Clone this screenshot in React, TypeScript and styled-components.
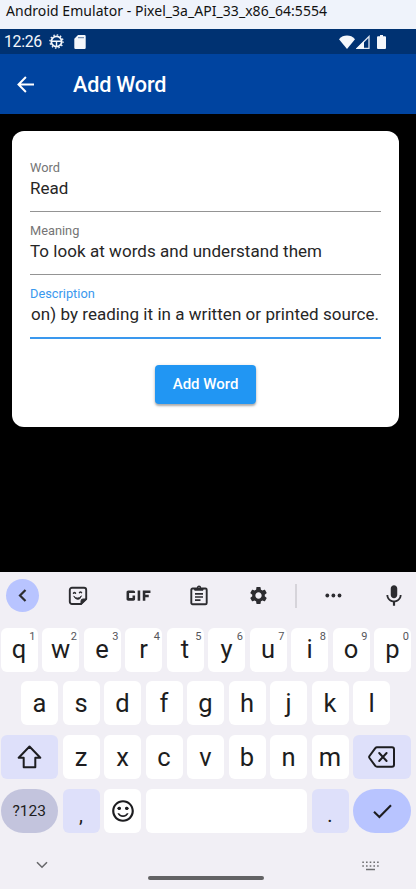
import React from "react";
import styled, { createGlobalStyle, css } from "styled-components";
import { MdOutlineGif, MdSettings, MdMic, MdSentimentSatisfiedAlt } from "react-icons/md";

const GlobalStyle = createGlobalStyle`
  * { box-sizing: border-box; }
  html, body { margin: 0; padding: 0; background: #000; overflow: hidden; }
  svg { display: block; flex: none; }
`;

const Screen = styled.div`
  width: 416px;
  height: 889px;
  display: flex;
  flex-direction: column;
  background: #000;
  font-family: Roboto, sans-serif;
  overflow: hidden;
`;

const WindowTitle = styled.div`
  height: 29px;
  flex: none;
  padding-left: 6px;
  background: #eff3fb;
  color: #111;
  font: 14px/22px "Noto Sans", sans-serif;
  letter-spacing: 0.04px;
  white-space: pre;
`;

const StatusBar = styled.div`
  height: 25px;
  flex: none;
  display: flex;
  align-items: center;
  padding: 0 30px 0 4px;
  background: #003272;
  color: #f4f7fb;
`;

const Clock = styled.span`
  width: 45px;
  font-size: 15.8px;
  line-height: 25px;
  letter-spacing: -0.3px;
`;

const StatusIcons = styled.div<{ $gap: number }>`
  display: flex;
  align-items: center;
  gap: ${(p) => p.$gap}px;
`;

const BatterySlot = styled.div`
  margin-left: 7px;
`;

const Spacer = styled.div`
  flex: 1;
`;

const AppBar = styled.header`
  height: 60px;
  flex: none;
  display: flex;
  align-items: center;
  gap: 38px;
  padding-left: 17px;
  background: #0044a0;
  color: #fff;
`;

const Heading = styled.h1`
  margin: 0;
  padding-top: 2px;
  font-size: 21.6px;
  line-height: 28px;
  font-weight: 500;
  letter-spacing: -0.18px;
`;

const Body = styled.main`
  flex: 1;
  padding: 17px 17.2px 0 12.3px;
`;

const Card = styled.div`
  height: 296.4px;
  display: flex;
  flex-direction: column;
  padding: 27px 17.7px 0;
  border-radius: 12px;
  background: #fff;
`;

const Field = styled.div<{ $active?: boolean }>`
  height: ${(p) => (p.$active ? 55 : 54)}px;
  margin-bottom: ${(p) => (p.$active ? 0 : 9)}px;
  flex: none;
  display: flex;
  flex-direction: column;
  white-space: nowrap;
  border-bottom: ${(p) => (p.$active ? "2px solid #3a98ee" : "1px solid #949494")};
`;

const Label = styled.label<{ $active?: boolean }>`
  font-size: 12.8px;
  line-height: 19px;
  color: ${(p) => (p.$active ? "#3a98ee" : "#757575")};
`;

const Value = styled.span<{ $shift?: number }>`
  padding-left: ${(p) => p.$shift ?? 0}px;
  font-size: 17px;
  line-height: 23px;
  letter-spacing: 0.045px;
  color: #262626;
`;

const Submit = styled.button`
  width: 101px;
  height: 39px;
  margin: 26px 0 0;
  align-self: center;
  border: 0;
  padding: 0;
  border-radius: 4px;
  background: #2196f3;
  color: #fff;
  font: 500 15px/39px Roboto, sans-serif;
  box-shadow: 0 2px 2px rgba(0, 0, 0, 0.26), 0 1px 4px rgba(0, 0, 0, 0.14);
`;

const Keyboard = styled.section`
  height: 317px;
  flex: none;
  display: flex;
  flex-direction: column;
  background: #f1eff5;
  color: #1d1d20;
`;

const Toolbar = styled.div`
  height: 55.500px;
  flex: none;
  display: grid;
  grid-template-columns: 45px 66px 54px 67px 53px 22px 53px 67px;
  align-items: center;
  justify-items: center;
  padding-bottom: 8.500px;
  color: #2c2c30;
`;

const BackCircle = styled.div`
  width: 33px;
  height: 33px;
  border-radius: 50%;
  display: flex;
  align-items: center;
  justify-content: center;
  background: #b8c4ff;
`;

const Divider = styled.div`
  width: 1.5px;
  height: 24px;
  background: #d6d4da;
`;

const Keys = styled.div`
  display: flex;
  flex-direction: column;
  gap: 9.95px;
`;

const KeyRow = styled.div<{ $inset?: number }>`
  display: flex;
  gap: 4.5px;
  height: 44px;
  padding-left: ${(p) => p.$inset ?? 0.5}px;
`;

type Tone = "plain" | "soft" | "symbols" | "enter";
const tones: Record<Tone, string> = {
  plain: "#ffffff",
  soft: "#dee0fa",
  symbols: "#c3c4dd",
  enter: "#b8c4ff",
};

const Key = styled.div<{ $width?: number; $tone?: Tone; $low?: boolean }>`
  position: relative;
  width: ${(p) => p.$width ?? 37}px;
  height: 44px;
  flex: none;
  display: flex;
  align-items: center;
  justify-content: center;
  border-radius: 6px;
  background: ${(p) => tones[p.$tone ?? "plain"]};
  font-size: 25.5px;
  font-weight: 370;
  line-height: 42px;
  ${(p) => p.$low && css`padding-top: 8px; font-size: 20px;`}
  ${(p) => (p.$tone === "symbols" || p.$tone === "enter") && css`
    border-radius: 22px;
    font-size: 15.5px;
    font-weight: 430;
    line-height: 44px;
  `}
`;

const Glyph = styled.span`
  padding-bottom: 1px;
`;

const Hint = styled.span`
  position: absolute;
  top: 3px;
  right: 2px;
  font-size: 11px;
  line-height: 12px;
  font-weight: 400;
  color: #55555a;
`;

const NavBar = styled.div`
  flex: 1;
  display: grid;
  grid-template-columns: 83px 1fr 92px;
  justify-items: center;
  align-items: start;
`;

const HomePill = styled.div`
  width: 116px;
  height: 4px;
  margin-top: 43px;
  margin-left: 4px;
  border-radius: 2px;
  background: #626264;
`;

const NavIcon = styled.div<{ $top: number }>`
  padding-top: ${(p) => p.$top}px;
`;

const line = { fill: "none", stroke: "currentColor", strokeLinecap: "round", strokeLinejoin: "round" } as const;

const DebugIcon = () => (
  <svg width="15" height="15" viewBox="0 0 15 15" {...line}>
    <circle cx="7.5" cy="7.5" r="5.2" strokeWidth="1.8" />
    <circle cx="7.5" cy="7.5" r="6.6" strokeWidth="1.3" strokeDasharray="1.5 1.96" strokeLinecap="butt" />
    <path d="M3 7.300h9M7.500 7.300v5.200" strokeWidth="1.400" strokeLinecap="butt" />
  </svg>
);

const SdIcon = () => (
  <svg width="12" height="14" viewBox="0 0 12 14" fill="currentColor">
    <path fillRule="evenodd" d="M4 0h6.500q1.200 0 1.200 1.200v11.600q0 1.200-1.200 1.200h-9Q.3 14 .3 12.800V3.700zM4.500 2v1.200h1V2zm2 0v1.200h1V2zm2 0v1.200h1V2z" />
  </svg>
);

const WifiIcon = () => (
  <svg width="16" height="14" viewBox="0 0 16 14" fill="currentColor">
    <path d="M8 14 0 4.200C2.200 1.600 5 .5 8 .5s5.800 1.100 8 3.700z" />
  </svg>
);

const SignalIcon = () => (
  <svg width="14" height="14" viewBox="0 0 14 14">
    <path d="M13 1.500V13.300H1.200z" fill="none" stroke="#dfe6f0" strokeWidth="1.300" />
    <path d="M8 6V14H0z" fill="currentColor" />
  </svg>
);

const BatteryIcon = () => (
  <svg width="9" height="14" viewBox="0 0 9 14" fill="currentColor">
    <path d="M3 0h3v1.200h2q1 0 1 1V13q0 1-1 1H1q-1 0-1-1V2.200q0-1 1-1h2z" />
  </svg>
);

const ArrowIcon = () => (
  <svg width="18" height="17" viewBox="0 0 18 17" {...line} strokeWidth="2" strokeLinecap="butt" strokeLinejoin="miter">
    <path d="M17 8.500H2M8.900 1 1.500 8.500 8.900 16" />
  </svg>
);

const ChevronLeft = () => (
  <svg width="9" height="13" viewBox="0 0 9 13" {...line} strokeWidth="2.200" strokeLinecap="butt" strokeLinejoin="miter">
    <path d="M7.500 1 2 6.500 7.500 12" />
  </svg>
);

const StickerIcon = () => (
  <svg width="20" height="20" viewBox="0 0 20 20" {...line} strokeWidth="1.900">
    <path d="M13 18H4a2.200 2.200 0 0 1-2.200-2.200V4A2.200 2.200 0 0 1 4 1.800h12A2.200 2.200 0 0 1 18.200 4v9z" />
    <path d="M13 18v-3q0-2 2-2h3.200z" fill="currentColor" strokeWidth="1" />
    <path d="M6 10.500q4 3.500 7.500-.7-1.300 4.200-4.300 3.500Q7 13 6 10.500z" fill="currentColor" strokeWidth=".8" />
    <path d="M5.500 7.200q1-1.300 2 0M11.500 6.600q1-1.300 2 0" strokeWidth="1.500" />
  </svg>
);

const ClipboardIcon = () => (
  <svg width="18" height="21" viewBox="0 0 18 21" {...line} strokeWidth="1.900">
    <rect x="1.300" y="3.500" width="15.400" height="15.700" rx="1.300" />
    <path d="M5 3.800h8v1.400H5z" fill="currentColor" strokeWidth="1" />
    <circle cx="9" cy="2.800" r="1.500" strokeWidth="1.400" />
    <path d="M5 8.800h8M5 12h8M5 15.200h5.500" strokeWidth="1.700" strokeLinecap="butt" />
  </svg>
);

const DotsIcon = () => (
  <svg width="17" height="5" viewBox="0 0 17 5" fill="currentColor">
    <circle cx="2.300" cy="2.500" r="1.900" /><circle cx="8.400" cy="2.500" r="1.900" /><circle cx="14.500" cy="2.500" r="1.900" />
  </svg>
);

const ShiftIcon = () => (
  <svg width="25" height="24" viewBox="0 0 25 24" {...line} strokeWidth="2">
    <path d="M12.500 1.500 1.700 12.800h5V22.300h11.600V12.800h5z" />
  </svg>
);

const BackspaceIcon = () => (
  <svg width="28" height="22" viewBox="0 0 28 22" {...line} strokeWidth="2">
    <path d="M9 1.300h15a2 2 0 0 1 2 2v15.400a2 2 0 0 1-2 2H9q-1 0-1.700-.8L1.500 12q-.7-1 0-2l5.800-7.900Q8 1.300 9 1.300z" />
    <path d="m11.200 7 7.400 8M18.600 7l-7.400 8" />
  </svg>
);

const CheckIcon = () => (
  <svg width="19" height="15" viewBox="0 0 19 15" {...line} strokeWidth="2.100" strokeLinecap="butt" strokeLinejoin="miter">
    <path d="M1 7.800 6.400 13 18 1.300" />
  </svg>
);

const ChevronDown = () => (
  <svg width="12" height="8" viewBox="0 0 12 8" {...line} stroke="#68686b" strokeWidth="1.600" strokeLinecap="butt" strokeLinejoin="miter">
    <path d="m1 1.200 5 5 5-5" />
  </svg>
);

const KeyboardIcon = () => (
  <svg width="17" height="10" viewBox="0 0 17 10" fill="none" stroke="#6e6e71">
    <path d="M.3 1.200h16.400M.3 4.900h16.400" strokeWidth="1.500" strokeDasharray="1.600 2.100" />
    <path d="M4 8.500h9" strokeWidth="1.500" />
  </svg>
);

export default function App() {
  return (
    <Screen>
      <GlobalStyle />
      <WindowTitle>Android Emulator - Pixel_3a_API_33_x86_64:5554</WindowTitle>
      <StatusBar>
        <Clock>12:26</Clock>
        <StatusIcons $gap={10}><DebugIcon /><SdIcon /></StatusIcons>
        <Spacer />
        <StatusIcons $gap={1.5}><WifiIcon /><SignalIcon /></StatusIcons>
        <BatterySlot><BatteryIcon /></BatterySlot>
      </StatusBar>
      <AppBar>
        <ArrowIcon />
        <Heading>Add Word</Heading>
      </AppBar>
      <Body>
        <Card>
          <Field><Label>Word</Label><Value>Read</Value></Field>
          <Field><Label>Meaning</Label><Value>To look at words and understand them</Value></Field>
          <Field $active><Label $active>Description</Label><Value $shift={1}>on) by reading it in a written or printed source.</Value></Field>
          <Submit>Add Word</Submit>
        </Card>
      </Body>
      <Keyboard>
        <Toolbar>
          <BackCircle><ChevronLeft /></BackCircle>
          <StickerIcon />
          <MdOutlineGif size={41} />
          <ClipboardIcon />
          <MdSettings size={21} />
          <Divider />
          <DotsIcon />
          <MdMic size={26} />
        </Toolbar>
        <Keys>
          <KeyRow>
            {[..."qwertyuiop"].map((c, i) => (
              <Key key={c}><Glyph>{c}</Glyph><Hint>{(i + 1) % 10}</Hint></Key>
            ))}
          </KeyRow>
          <KeyRow $inset={21}>
            {[..."asdfghjkl"].map((c) => <Key key={c}><Glyph>{c}</Glyph></Key>)}
          </KeyRow>
          <KeyRow>
            <Key $width={57.5} $tone="soft"><ShiftIcon /></Key>
            {[..."zxcvbnm"].map((c) => <Key key={c}><Glyph>{c}</Glyph></Key>)}
            <Key $width={58} $tone="soft"><BackspaceIcon /></Key>
          </KeyRow>
          <KeyRow>
            <Key $width={57.5} $tone="symbols">?123</Key>
            <Key $tone="soft" $low>,</Key>
            <Key><MdSentimentSatisfiedAlt size={26} /></Key>
            <Key $width={161.5} />
            <Key $tone="soft" $low>.</Key>
            <Key $width={58} $tone="enter"><CheckIcon /></Key>
          </KeyRow>
        </Keys>
        <NavBar>
          <NavIcon $top={28}><ChevronDown /></NavIcon>
          <HomePill />
          <NavIcon $top={28}><KeyboardIcon /></NavIcon>
        </NavBar>
      </Keyboard>
    </Screen>
  );
}
